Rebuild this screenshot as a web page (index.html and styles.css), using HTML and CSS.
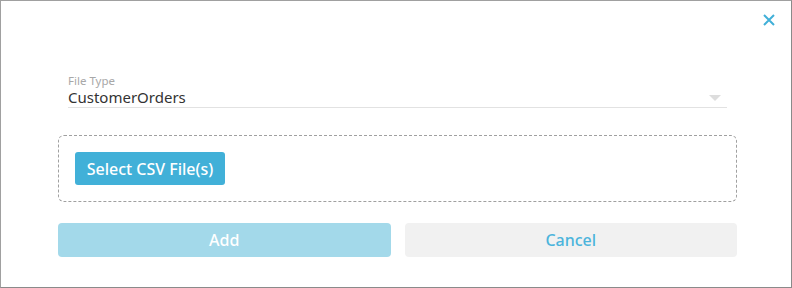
FILE: index.html
```html
<!DOCTYPE html>
<html lang="en">
<head>
    <meta charset="UTF-8">
    <meta name="viewport" content="width=device-width, initial-scale=1.0">
    <title>Import Files</title>
    <link rel="stylesheet" href="styles.css">
</head>
<body>
    <!-- Import Dialog -->
    <div class="dialog">
        <button class="close-btn" aria-label="Close">
            <svg width="12" height="12" viewBox="0 0 12 12">
                <path d="M1 1 L11 11 M11 1 L1 11" stroke="#41b0d8" stroke-width="2" fill="none"/>
            </svg>
        </button>

        <div class="field">
            <label class="field-label">File Type</label>
            <div class="field-select">
                <span>CustomerOrders</span>
                <span class="arrow"></span>
            </div>
        </div>

        <div class="drop-zone">
            <button class="select-btn">Select CSV File(s)</button>
        </div>

        <div class="actions">
            <button class="add-btn" disabled>Add</button>
            <button class="cancel-btn">Cancel</button>
        </div>
    </div>
</body>
</html>
```

FILE: styles.css
```css
body {
    font-family: "Noto Sans", Roboto, sans-serif;
    margin: 0;
    padding: 0;
}

.dialog {
    position: relative;
    width: 792px;
    height: 288px;
    box-sizing: border-box;
    border: 1px solid #8a8a8a;
    border-top-color: #a0a0a0;
    border-left-color: #a0a0a0;
    padding: 73px 54px 0 57px;
    background: #fff;
}

.close-btn {
    position: absolute;
    top: 13px;
    right: 16px;
    padding: 0;
    border: none;
    background: none;
    cursor: pointer;
    line-height: 0;
}

.field {
    margin: 0 10px;
}

.field-label {
    display: block;
    font-size: 11.5px;
    line-height: 14px;
    color: #a8a8a8;
}

.field-select {
    display: flex;
    justify-content: space-between;
    align-items: center;
    font-size: 15px;
    line-height: 18px;
    color: #333;
    border-bottom: 1px solid #e2e2e2;
    padding-bottom: 1px;
}

.field-select .arrow {
    width: 0;
    height: 0;
    border-left: 6px solid transparent;
    border-right: 6px solid transparent;
    border-top: 6px solid #ddd;
    margin-right: 6px;
    margin-top: 2px;
}

.drop-zone {
    margin-top: 27px;
    padding: 16px;
    border: 1px dashed #a0a0a0;
    border-radius: 6px;
}

.select-btn {
    font-family: inherit;
    width: 150px;
    height: 33px;
    border: none;
    border-radius: 3px;
    background-color: #41b0d8;
    color: #fff;
    font-size: 16px;
    font-weight: 500;
    cursor: pointer;
}

.actions {
    display: flex;
    gap: 14px;
    margin-top: 21px;
}

.actions button {
    flex: 1;
    height: 34px;
    border: none;
    border-radius: 4px;
    font-family: inherit;
    font-size: 16px;
    font-weight: 500;
    cursor: pointer;
}

.add-btn {
    background-color: #a3d9ea;
    color: #fff;
}

.cancel-btn {
    background-color: #f1f1f1;
    color: #4bb4dc;
}
```
